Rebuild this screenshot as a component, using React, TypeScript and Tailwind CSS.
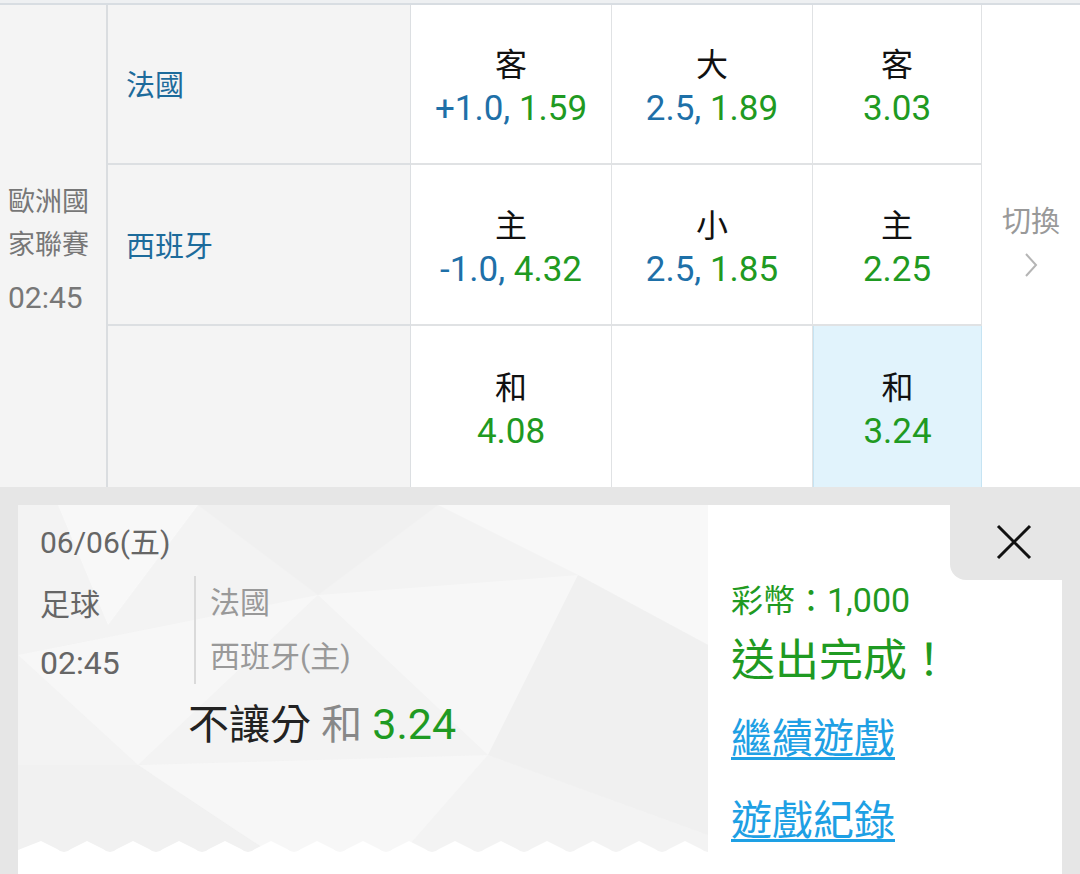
import React from 'react';

interface OddsCell {
  label?: string;
  line?: string;
  odds?: string;
  selected?: boolean;
}

const rows: { team: string; cells: OddsCell[] }[] = [
  {
    team: '法國',
    cells: [
      { label: '客', line: '+1.0, ', odds: '1.59' },
      { label: '大', line: '2.5, ', odds: '1.89' },
      { label: '客', odds: '3.03' },
    ],
  },
  {
    team: '西班牙',
    cells: [
      { label: '主', line: '-1.0, ', odds: '4.32' },
      { label: '小', line: '2.5, ', odds: '1.85' },
      { label: '主', odds: '2.25' },
    ],
  },
  {
    team: '',
    cells: [{ label: '和', odds: '4.08' }, {}, { label: '和', odds: '3.24', selected: true }],
  },
];

// zigzag edge at the bottom of the ticket
const zigzag = (() => {
  const P = 46;
  let d = 'M0 20 L0 10';
  for (let x = 0; x < 720; x += P) {
    d += ` L${x + P / 2} 1 L${x + P - 7} 9 Q${x + P} 15 ${x + P + 7} 9`;
  }
  return d + ' L720 20 Z';
})();

const App: React.FC = () => {
  return (
    <div className="w-[1080px] h-[874px] overflow-hidden bg-white font-[Roboto,'Noto_Sans_CJK_TC',sans-serif]">
      <div className="h-[3px] bg-[#eef0f2]" />
      <div className="border-t-2 border-[#d8dde2] grid grid-cols-[108px_303px_201px_201px_169px_98px] grid-rows-[160px_161px_161px]">
        <div className="row-span-3 bg-[#f4f4f4] border-r-2 border-[#dadde0] flex flex-col justify-center pl-[8px] pt-[8px] text-[27px] text-[#777]">
          <div className="leading-[43px]">歐洲國</div>
          <div className="leading-[43px]">家聯賽</div>
          <div className="leading-[43px] mt-[9px] text-[30px]">02:45</div>
        </div>

        {rows.map((row, ri) => (
          <React.Fragment key={ri}>
            <div
              className={`bg-[#f4f4f4] border-r border-[#dcdfe2] flex items-center pl-[18px] pt-[6px] text-[29px] text-[#1d6b9b] ${
                ri < 2 ? 'border-b-2' : ''
              }`}
            >
              {row.team}
            </div>
            {row.cells.map((c, ci) => (
              <div
                key={ci}
                className={`flex flex-col items-center justify-center pt-[6px] border-r border-[#e0e2e4] ${
                  ri < 2 ? 'border-b-2' : ''
                } ${c.selected ? 'bg-[#e1f3fc] border-l border-l-[#c6e4f3] border-r-[#c6e4f3]' : 'bg-white'}`}
              >
                {c.label && <div className="text-[32px] leading-[44px] text-[#111]">{c.label}</div>}
                {c.odds && (
                  <div className="text-[35px] leading-[44px]">
                    {c.line && <span className="text-[#1e70a8]">{c.line}</span>}
                    <span className="text-[#1f9a22]">{c.odds}</span>
                  </div>
                )}
              </div>
            ))}
            {ri === 0 && (
              <div className="row-span-3 bg-white flex flex-col items-center justify-center text-[29px] text-[#999]">
                <div className="leading-[40px] -mt-[12px]">切換</div>
                <svg width="14" height="26" viewBox="0 0 14 26" className="mt-[10px]">
                  <polyline points="2,2 12,13 2,24" fill="none" stroke="#b5b5b5" strokeWidth="2" />
                </svg>
              </div>
            )}
          </React.Fragment>
        ))}
      </div>

      <div className="bg-[#e6e6e6] pt-[18px] px-[18px] h-[420px]">
        <div className="flex h-[420px] bg-white">
          <div className="w-[690px]">
            <div className="relative h-[353px] bg-[#f3f3f3] overflow-hidden">
              <svg className="absolute inset-0" width="690" height="353" viewBox="0 0 690 353">
                <polygon points="40,0 180,0 90,120" fill="#ffffff" opacity="0.45" />
                <polygon points="180,0 420,0 300,90" fill="#ededed" opacity="0.5" />
                <polygon points="420,0 690,0 690,140 560,70" fill="#ffffff" opacity="0.4" />
                <polygon points="0,150 300,90 120,260" fill="#f7f7f7" opacity="0.8" />
                <polygon points="300,90 560,70 470,250" fill="#ffffff" opacity="0.35" />
                <polygon points="560,70 690,140 690,330 470,250" fill="#efefef" opacity="0.6" />
                <polygon points="0,260 120,260 260,353 0,353" fill="#f0f0f0" opacity="0.7" />
                <polygon points="120,260 470,250 380,353 260,353" fill="#f8f8f8" opacity="0.7" />
                <path d={zigzag} fill="#ffffff" transform="translate(0,335)" />
              </svg>

              <div className="relative pl-[22px] pt-[18px]">
                <div className="text-[30px] leading-[40px] text-[#666]">06/06(五)</div>
                <div className="flex mt-[13px] text-[30px]">
                  <div className="w-[154px] text-[#666]">
                    <div className="leading-[58px]">足球</div>
                    <div className="leading-[58px] text-[32px]">02:45</div>
                  </div>
                  <div className="h-[108px] border-l-2 border-[#dadada] pl-[14px] text-[#999]">
                    <div className="leading-[54px]">法國</div>
                    <div className="leading-[54px]">西班牙(主)</div>
                  </div>
                </div>
                <div className="ml-[148px] mt-[8px] text-[41px] leading-[48px]">
                  <span className="text-[#222]">不讓分</span>
                  <span className="text-[#888]"> 和 </span>
                  <span className="text-[#1f9a22] text-[43px]">3.24</span>
                </div>
              </div>
            </div>
          </div>

          <div className="relative flex-1 bg-white pl-[23px] pt-[75px]">
            <div className="absolute top-0 right-0 w-[112px] h-[75px] bg-[#e6e6e6] rounded-bl-[16px] flex items-center justify-end pr-[30px]">
              <svg width="36" height="36" viewBox="0 0 36 36" className="-mt-[2px]">
                <path d="M2 2 L34 34 M34 2 L2 34" stroke="#111" strokeWidth="3" />
              </svg>
            </div>
            <div className="text-[32px] leading-[40px] text-[#1f9a22]">
              彩幣：<span className="text-[34px]">1,000</span>
            </div>
            <div className="mt-[12px] text-[44px] leading-[56px] text-[#1f9a22]">送出完成！</div>
            <div className="mt-[22px] text-[41px] leading-[56px]">
              <a className="text-[#1ea0e4] underline decoration-[3px] underline-offset-[4px]">繼續遊戲</a>
            </div>
            <div className="mt-[26px] text-[41px] leading-[56px]">
              <a className="text-[#1ea0e4] underline decoration-[3px] underline-offset-[4px]">遊戲紀錄</a>
            </div>
          </div>
        </div>
      </div>
    </div>
  );
};

export default App;
